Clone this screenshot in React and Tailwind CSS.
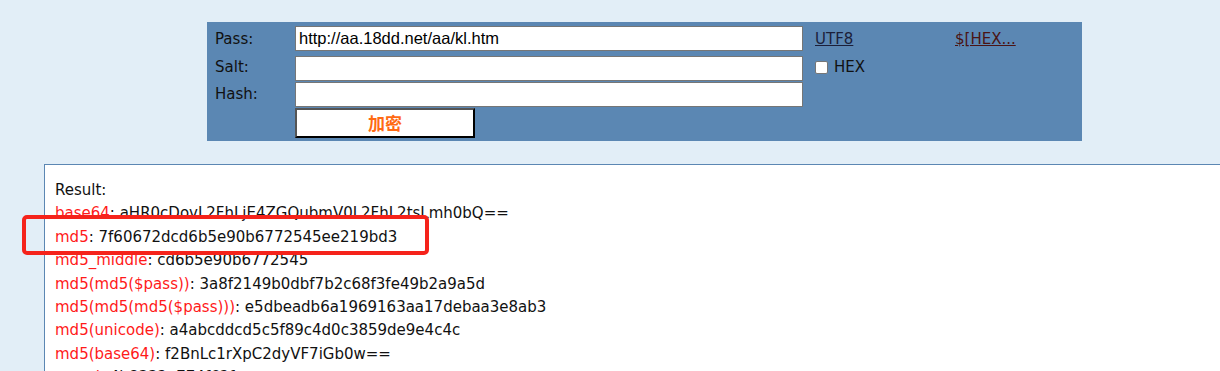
import React from 'react';

const rows = [
  ['base64', 'aHR0cDovL2FhLjE4ZGQubmV0L2FhL2tsLmh0bQ=='],
  ['md5', '7f60672dcd6b5e90b6772545ee219bd3'],
  ['md5_middle', 'cd6b5e90b6772545'],
  ['md5(md5($pass))', '3a8f2149b0dbf7b2c68f3fe49b2a9a5d'],
  ['md5(md5(md5($pass)))', 'e5dbeadb6a1969163aa17debaa3e8ab3'],
  ['md5(unicode)', 'a4abcddcd5c5f89c4d0c3859de9e4c4c'],
  ['md5(base64)', 'f2BnLc1rXpC2dyVF7iGb0w=='],
  ['mysql', '4b8332a774f62f'],
];

function App() {
  return (
    <div className="relative w-[1220px] h-[371px] overflow-hidden bg-[#e2eef7] font-['DejaVu_Sans',sans-serif] text-[15px] text-[#111]">
      {/* top form */}
      <div className="pt-[22px] pl-[207px]">
        <div className="w-[875px] h-[119px] bg-[#5b87b3] pl-[8px] pt-[4px]">
          <div className="grid grid-cols-[80px_508px_152px_1fr]">
            <div className="h-[26px] leading-[26px]">Pass:</div>
            <input
              defaultValue="http://aa.18dd.net/aa/kl.htm"
              className="h-[25px] w-[508px] bg-white border border-[#767676] px-[3px] font-['Liberation_Sans',sans-serif] text-[16.5px] text-black outline-none"
            />
            <div className="pl-[12px] h-[26px] leading-[26px]">
              <span className="underline text-[#1b1f3a]">UTF8</span>
            </div>
            <div className="h-[26px] leading-[26px]">
              <span className="underline text-[#4a1414]">$[HEX...</span>
            </div>

            <div className="h-[26px] leading-[26px] mt-[2px]">Salt:</div>
            <input className="mt-[4px] h-[25px] w-[508px] bg-white border border-[#767676] outline-none" />
            <div className="pl-[12px] mt-[2px] h-[26px] flex items-center gap-[6px]">
              <span className="inline-block w-[13px] h-[13px] bg-white border border-[#767676] rounded-[2px]"></span>
              <span>HEX</span>
            </div>
            <div></div>

            <div className="h-[26px] leading-[26px]">Hash:</div>
            <input className="mt-[1px] h-[25px] w-[508px] bg-white border border-[#767676] outline-none" />
            <div></div>
            <div></div>

            <div></div>
            <div className="mt-[1px]">
              <button className="w-[180px] h-[30px] bg-white border-2 border-t-[#555] border-l-[#555] border-b-black border-r-black text-[#ff6a13] font-bold text-[17px] font-['Noto_Sans_CJK_SC',sans-serif] leading-[26px]">
                加密
              </button>
            </div>
            <div></div>
            <div></div>
          </div>
        </div>
      </div>

      {/* result */}
      <div className="mt-[23px] ml-[44px] border-t border-l border-[#5b87b3] bg-white h-[300px] pl-[10px] pt-[14px]">
        <div className="leading-[23.4px]">Result:</div>
        {rows.map(([k, v]) => (
          <div key={k} className="leading-[23.4px] whitespace-nowrap">
            <span className="text-[#ff1a1a]">{k}</span>: {v}
          </div>
        ))}
      </div>

      {/* annotation highlight */}
      <div className="absolute left-[22px] top-[215px] w-[407px] h-[40px] border-[4px] border-[#f5231b] rounded-[5px]"></div>
    </div>
  );
}

export default App;
